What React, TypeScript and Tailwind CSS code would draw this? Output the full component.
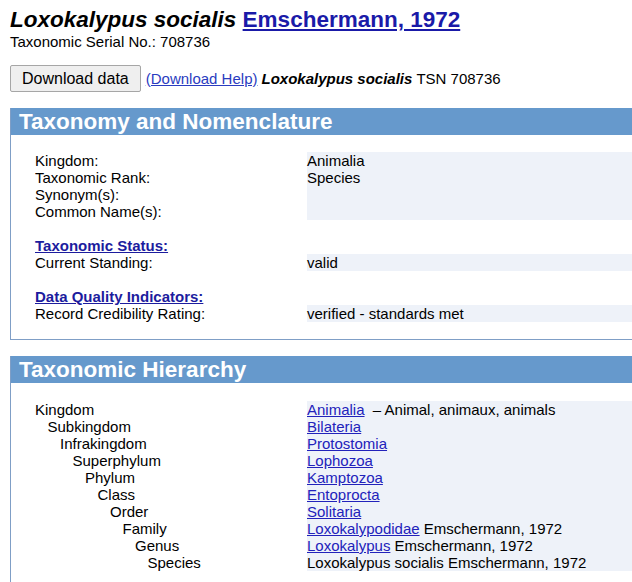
import React from 'react';

// ranks of the hierarchy, each one indented a further step
const hierarchy: { rank: string; name: string; link: boolean; extra?: string }[] = [
  { rank: 'Kingdom', name: 'Animalia', link: true, extra: '\u00a0\u00a0\u2013 Animal, animaux, animals' },
  { rank: 'Subkingdom', name: 'Bilateria', link: true },
  { rank: 'Infrakingdom', name: 'Protostomia', link: true },
  { rank: 'Superphylum', name: 'Lophozoa', link: true },
  { rank: 'Phylum', name: 'Kamptozoa', link: true },
  { rank: 'Class', name: 'Entoprocta', link: true },
  { rank: 'Order', name: 'Solitaria', link: true },
  { rank: 'Family', name: 'Loxokalypodidae', link: true, extra: ' Emschermann, 1972' },
  { rank: 'Genus', name: 'Loxokalypus', link: true, extra: ' Emschermann, 1972' },
  { rank: 'Species', name: 'Loxokalypus socialis', link: false, extra: ' Emschermann, 1972' },
];

const indentClass = [
  'pl-0',
  'pl-[12.5px]',
  'pl-[25px]',
  'pl-[37.5px]',
  'pl-[50px]',
  'pl-[62.5px]',
  'pl-[75px]',
  'pl-[87.5px]',
  'pl-[100px]',
  'pl-[112.5px]',
];

const Section = ({ title, children }: { title: string; children: React.ReactNode }) => (
  <div className="ml-[10px] w-[660px] border-b border-l border-[#7f9ec6]">
    <div className="h-[27px] bg-[#6699cc] pl-[8px] text-[22.5px] font-bold leading-[27px] text-white">
      {title}
    </div>
    {children}
  </div>
);

// label + shaded value cell
const Row = ({ label, value }: { label: React.ReactNode; value?: React.ReactNode }) => (
  <div className="grid grid-cols-[272px_1fr]">
    <div>{label}</div>
    <div className="h-[17px] bg-[#eef2f9]">{value}</div>
  </div>
);

const StatusLink = ({ children }: { children: React.ReactNode }) => (
  <div>
    <a href="#" className="font-bold text-[#1c1c9e] underline">
      {children}
    </a>
  </div>
);

export default function App() {
  return (
    <div className="h-[582px] w-[632px] overflow-hidden bg-white font-['Liberation_Sans',Arial,sans-serif] text-black">
      <div className="ml-[10px] pt-[7px]">
        <div className="text-[22.5px] font-bold leading-[26px]">
          <span className="italic">Loxokalypus socialis</span>{' '}
          <a href="#" className="text-[#1a1aa8] underline">
            Emschermann, 1972
          </a>
        </div>
        <div className="text-[15px] leading-[17px]">Taxonomic Serial No.: 708736</div>

        <div className="mt-[15px] flex items-baseline text-[15px]">
          <button className="h-[27px] rounded-[2px] border border-[#a6a6a6] bg-[#efefef] px-[11px] text-[16px] leading-[25px] text-black">
            Download data
          </button>
          <a href="#" className="ml-[5px] text-[#2a3cc0] underline">
            (Download Help)
          </a>
          <span className="ml-[4px] font-bold italic">Loxokalypus socialis</span>
          <span className="ml-[4px]">TSN 708736</span>
        </div>
      </div>

      <div className="mt-[16px]">
        <Section title="Taxonomy and Nomenclature">
          <div className="pb-[17px] pl-[24px] pt-[17px] text-[15px] leading-[17px]">
            <Row label="Kingdom:" value="Animalia" />
            <Row label="Taxonomic Rank:" value="Species" />
            <Row label="Synonym(s):" />
            <Row label="Common Name(s):" />
            <div className="h-[17px]" />
            <StatusLink>Taxonomic Status:</StatusLink>
            <Row label="Current Standing:" value="valid" />
            <div className="h-[17px]" />
            <StatusLink>Data Quality Indicators:</StatusLink>
            <Row label="Record Credibility Rating:" value="verified - standards met" />
          </div>
        </Section>
      </div>

      <div className="mt-[16px]">
        <Section title="Taxonomic Hierarchy">
          <div className="pb-[17px] pl-[24px] pt-[18px] text-[15px] leading-[17px]">
            {hierarchy.map((item, i) => (
              <Row
                key={item.rank}
                label={<span className={`block ${indentClass[i]}`}>{item.rank}</span>}
                value={
                  <>
                    {item.link ? (
                      <a href="#" className="text-[#2222bb] underline">
                        {item.name}
                      </a>
                    ) : (
                      item.name
                    )}
                    {item.extra}
                  </>
                }
              />
            ))}
          </div>
        </Section>
      </div>
    </div>
  );
}
